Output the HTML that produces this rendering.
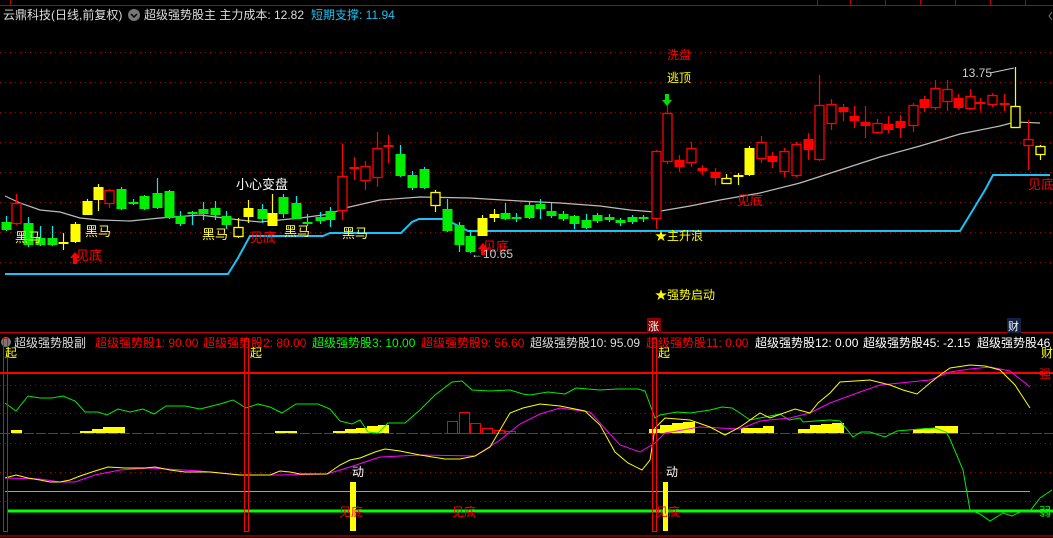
<!DOCTYPE html>
<html><head><meta charset="utf-8"><style>
html,body{margin:0;padding:0;background:#000;width:1053px;height:538px;overflow:hidden}
svg{display:block}
text{font-family:"Liberation Sans","Noto Sans CJK SC",sans-serif;font-size:12px}
</style></head><body>
<svg id="s" width="1053" height="538" xmlns="http://www.w3.org/2000/svg">
<rect width="1053" height="538" fill="#000"/>
<!-- top strip -->
<line x1="0" y1="5.5" x2="1053" y2="5.5" stroke="#b00" stroke-width="1"/>
<line x1="10.5" y1="0" x2="10.5" y2="5" stroke="#b00"/>
<g stroke="#b00"><line x1="817.5" y1="0" x2="817.5" y2="5"/><line x1="850.5" y1="0" x2="850.5" y2="5"/><line x1="885.5" y1="0" x2="885.5" y2="5"/><line x1="920.5" y1="0" x2="920.5" y2="5"/><line x1="955.5" y1="0" x2="955.5" y2="5"/><line x1="990.5" y1="0" x2="990.5" y2="5"/><line x1="1025.5" y1="0" x2="1025.5" y2="5"/></g>
<text x="3" y="19" fill="#ddd">云鼎科技(日线,前复权)</text>
<circle cx="134" cy="15" r="6" fill="#777"/><path d="M131 14l3 3 3-3" stroke="#000" stroke-width="1.5" fill="none"/>
<text x="144" y="19" fill="#ddd">超级强势股主  主力成本: 12.82</text>
<text x="311" y="19" fill="#19c3f5">短期支撑: 11.94</text>
<path d="M1052 12l-3 4 3 4" stroke="#777" fill="none"/>
<g id="grid" stroke="#a00" stroke-dasharray="1,4"></g>
<polyline fill="none" stroke="#bbb" stroke-width="1.2" points="5,196 20,203 40,210 60,212 80,218 100,220 130,221 160,218 200,215 240,220 260,222 300,218 330,214 345,208 380,200 420,197 470,198 520,201 560,203 600,206 630,210 655,212 690,206 720,200 760,193 800,183 840,170 880,157 920,146 960,134 1000,126 1015,122 1040,123"/>
<polyline fill="none" stroke="#19c3f5" stroke-width="2" points="5,274 228,274 238,258 250,236 323,236 330,233 401,233 412,222 419,219 445,219 468,231 960,231 968,218 985,190 993,175 1050,175"/>
<g id="cd"></g>
<!-- labels -->
<g fill="#ffff40" font-size="13">
<text x="15" y="242" style="font-size:13px">黑马</text><text x="85" y="236" style="font-size:13px">黑马</text><text x="202" y="239" style="font-size:13px">黑马</text><text x="284" y="236" style="font-size:13px">黑马</text><text x="342" y="238" style="font-size:13px">黑马</text>
</g>
<g fill="#f00"><text x="76" y="260" style="font-size:13px">见底</text><text x="250" y="242" style="font-size:13px">见底</text><text x="483" y="251" style="font-size:13px">见底</text><text x="737" y="205" style="font-size:13px">见底</text><text x="1028" y="189" style="font-size:13px">见底</text>
<path d="M70 258l5-6 5 6h-3v6h-4v-6z"/><path d="M478 249l5-6 5 6h-3v6h-4v-6z"/></g>
<text x="236" y="189" fill="#fff" style="font-size:13px">小心变盘</text>
<text x="471" y="258" fill="#ccc">←10.65</text>
<text x="667" y="59" fill="#f00">洗盘</text>
<text x="667" y="82" fill="#ff0">逃顶</text>
<path d="M665 94h4v6h3l-5 6-5-6h3z" fill="#0d0"/>
<text x="962" y="77" fill="#ccc">13.75</text><path d="M990 73l24-5" stroke="#ccc"/>
<text x="655" y="240" fill="#ff0">★主升浪</text>
<text x="655" y="299" fill="#ff0">★强势启动</text>
<!-- separator -->
<line x1="0" y1="332.5" x2="1053" y2="332.5" stroke="#c00"/>
<rect x="647" y="318" width="14" height="15" fill="#800"/><text x="648" y="330" fill="#fff" style="font-size:11px">涨</text>
<rect x="1007" y="318" width="14" height="15" fill="#124"/><text x="1008" y="330" fill="#fff" style="font-size:11px">财</text>
<circle cx="6" cy="342" r="5" fill="#777"/>
<text x="14" y="347" fill="#ddd">超级强势股副</text>
<text x="95" y="347" fill="#f00">超级强势股1: 90.00</text>
<text x="203" y="347" fill="#f00">超级强势股2: 80.00</text>
<text x="312" y="347" fill="#0f0">超级强势股3: 10.00</text>
<text x="421" y="347" fill="#f00">超级强势股9: 56.60</text>
<text x="530" y="347" fill="#ddd">超级强势股10: 95.09</text>
<text x="646" y="347" fill="#f00">超级强势股11: 0.00</text>
<text x="755" y="347" fill="#fff">超级强势股12: 0.00</text>
<text x="863" y="347" fill="#fff">超级强势股45: -2.15</text>
<text x="977" y="347" fill="#fff">超级强势股46</text>
<g id="grid2" stroke="#a00" stroke-dasharray="1,4"></g>
<line x1="0" y1="373" x2="1053" y2="373" stroke="#f00" stroke-width="2"/>
<line x1="0" y1="433.5" x2="1053" y2="433.5" stroke="#e00" stroke-dasharray="10,2"/>
<line x1="5" y1="491.5" x2="1030" y2="491.5" stroke="#3cc"/>
<line x1="8" y1="511" x2="1053" y2="511" stroke="#0f0" stroke-width="3"/>
<line x1="0" y1="536" x2="1053" y2="536" stroke="#d00"/>
<g id="bars"></g>
<polyline fill="none" stroke="#0e0" points="5,403 16,411 28,396 40,398 52,398 63,396 75,401 85,412 98,412 107,415 118,409 130,412 143,409 154,414 166,406 185,406 200,409 220,404 233,400 246,408 258,404 270,407 282,413 296,404 318,404 330,409 340,421 352,424 360,420 368,432 378,433 388,423 405,423 420,410 435,395 452,382 462,381 472,390 490,391 510,390 523,394 530,395 548,392 565,394 576,388 600,390 617,389 638,389 645,391 655,418 660,415 677,412 690,413 710,410 722,407 732,408 740,413 750,420 765,417 780,414 789,420 800,418 803,422 815,421 830,420 840,421 853,437 861,432 870,432 885,437 897,431 920,429 935,428 946,432 950,439 963,470 970,510 980,514 990,521 1003,513 1012,516 1020,512 1030,511 1040,498 1052,490"/>
<polyline fill="none" stroke="#f0f" points="5,478 40,479 60,482 75,482 95,475 120,470 150,468 200,471 240,475 280,475 327,474 350,467 380,457 420,455 475,456 500,440 520,424 540,414 560,408 590,412 620,445 640,452 655,443 665,433 700,427 740,429 760,421 790,418 810,413 830,403 860,392 880,385 900,383 930,380 950,372 970,369 990,367 1010,371 1030,387"/>
<polyline fill="none" stroke="#ff0" points="5,478 16,475 28,478 40,480 50,482 60,482 70,480 80,476 95,471 108,467 125,468 145,468 155,467 170,470 185,472 210,472 240,475 270,475 280,471 290,472 300,474 327,474 340,465 350,460 360,458 375,452 385,449 400,451 420,455 445,459 460,459 475,456 490,447 510,413 523,408 540,404 560,406 585,411 600,425 615,452 628,463 642,470 650,460 655,428 665,418 690,420 710,427 725,435 740,427 760,413 770,418 795,409 810,413 818,403 830,393 840,382 870,380 890,385 903,390 917,394 930,383 940,375 950,368 970,365 985,366 1000,370 1015,385 1030,408"/>
<g fill="none" stroke="#f00"><rect x="3.5" y="338.5" width="4" height="193"/><rect x="244.5" y="338.5" width="4" height="193"/><rect x="652.5" y="338.5" width="4" height="193"/></g>
<rect x="350" y="482" width="6" height="49" fill="#ff0"/><rect x="663" y="482" width="5" height="49" fill="#ff0"/>
<text x="352" y="476" fill="#fff">动</text><text x="666" y="476" fill="#fff">动</text>
<g fill="#f00"><text x="339" y="516">见底</text><text x="452" y="516">见底</text><text x="656" y="516">见底</text><text x="1039" y="378">强</text></g>
<text x="1039" y="516" fill="#0e0">弱</text>
<g fill="#ff0" style="font-size:10px"><text x="5" y="357">起</text><text x="250" y="357">起</text><text x="658" y="357">起</text><text x="1041" y="357">财</text></g>
</svg>
<script>
var NS="http://www.w3.org/2000/svg";
function el(p,t,a){var e=document.createElementNS(NS,t);for(var k in a)e.setAttribute(k,a[k]);p.appendChild(e);return e}
var g=document.getElementById('grid');
[52,82,112,142,172,202,232,262].forEach(function(y){el(g,'line',{x1:0,x2:1053,y1:y+.5,y2:y+.5})});
var g2=document.getElementById('grid2');
[385,413,443,472,501].forEach(function(y){el(g2,'line',{x1:0,x2:1053,y1:y+.5,y2:y+.5})});
var C={r:'#f00',g:'#00ee00',y:'#ff0',Y:'#ff0',R:'#f00'};
var d=[[6,222,230,216,231,'g'],[16,203,223,194,225,'R'],[28,223,245,217,247,'g'],[40,238,245,226,246,'g'],[52,238,245,226,246,'g'],[63,242,244,233,250,'y'],[75,224,242,222,243,'y'],[87,201,215,199,215,'y'],[98,187,200,184,211,'y'],[109,190,203,189,208,'R'],[121,189,209,187,210,'g'],[133,202,204,199,205,'g'],[144,196,209,195,210,'g'],[157,193,208,178,209,'g'],[169,191,218,190,219,'g'],[180,216,224,211,226,'g'],[192,212,214,211,225,'g'],[203,209,214,202,220,'g'],[215,208,215,201,220,'g'],[226,216,225,211,229,'g'],[238,227,236,218,238,'Y'],[248,208,217,200,223,'y'],[262,209,219,204,223,'g'],[272,213,226,194,226,'y'],[283,197,214,194,218,'g'],[296,203,219,196,219,'g'],[307,222,224,214,226,'g'],[320,217,221,212,224,'g'],[330,211,220,207,227,'g'],[342,176,210,144,220,'R'],[354,167,169,157,180,'r'],[365,166,180,161,190,'R'],[377,148,177,132,187,'R'],[388,145,147,135,163,'r'],[400,154,176,145,177,'g'],[412,175,188,171,190,'g'],[424,169,188,167,189,'g'],[435,192,205,190,212,'Y'],[447,209,231,199,232,'g'],[459,225,245,222,252,'g'],[470,236,252,230,253,'g'],[482,218,236,215,236,'y'],[494,214,218,209,222,'y'],[505,213,219,203,220,'g'],[516,217,219,213,222,'g'],[529,205,218,201,219,'g'],[540,204,209,199,219,'g'],[551,211,216,203,218,'g'],[563,214,219,211,221,'g'],[574,216,224,215,229,'g'],[586,220,228,214,229,'g'],[597,215,221,213,223,'g'],[609,217,220,214,222,'g'],[620,220,223,218,226,'g'],[632,217,222,215,224,'g'],[643,217,218,215,222,'g'],[656,151,218,150,229,'R'],[667,113,161,94,164,'R'],[679,160,167,155,172,'r'],[691,148,162,142,167,'R'],[702,168,171,165,175,'r'],[715,172,178,168,185,'r'],[726,178,183,174,184,'Y'],[738,175,177,173,185,'y'],[749,148,175,146,176,'y'],[761,142,158,136,163,'R'],[772,156,162,152,168,'r'],[784,151,171,148,177,'R'],[796,144,175,142,177,'R'],[808,139,150,133,160,'r'],[819,105,159,75,161,'R'],[831,104,123,99,130,'R'],[843,107,112,104,121,'r'],[854,116,121,106,128,'r'],[865,122,126,106,138,'r'],[877,123,132,119,134,'R'],[888,124,130,116,133,'r'],[900,121,128,115,138,'r'],[913,105,125,103,132,'R'],[924,99,108,96,112,'r'],[935,88,107,80,110,'R'],[947,89,101,80,111,'R'],[958,98,108,94,110,'r'],[970,96,108,89,110,'R'],[980,102,104,98,111,'r'],[992,95,104,93,107,'R'],[1004,103,104,94,111,'r'],[1015,106,127,67,128,'Y'],[1028,139,145,120,170,'R'],[1040,146,154,145,160,'Y']];
var cd=document.getElementById('cd');
d.forEach(function(c){var x=c[0],t=c[1],b=c[2],col=C[c[5]];var wc=col;if(c[5]=='g')wc='#0ee';
el(cd,'line',{x1:x+.5,x2:x+.5,y1:c[3],y2:c[4],stroke:wc,'stroke-width':1.2});
var h=Math.max(b-t,2);
if(c[5]=='R'||c[5]=='Y'){el(cd,'rect',{x:x-4,y:t+.5,width:9,height:h,fill:'#000',stroke:col,'stroke-width':1.3})}
else el(cd,'rect',{x:x-4.5,y:t,width:10,height:h,fill:col});});
var bars=document.getElementById('bars');
var yb=[[11,22,3],[80,92,2],[92,103,4],[103,114,6],[114,125,6],[275,297,2],[333,345,2],[345,356,4],[356,367,5],[367,378,7],[378,389,8],[649,660,4],[660,672,8],[672,683,10],[683,695,11],[741,763,5],[763,774,7],[798,810,4],[810,821,8],[821,832,9],[832,844,10],[913,924,4],[924,935,5],[935,946,7],[946,958,7]];
yb.forEach(function(b){el(bars,'rect',{x:b[0],y:433-b[2],width:b[1]-b[0],height:b[2],fill:'#ff0'})});
[[447,458,12],[459,470,21],[470,481,10],[482,493,5],[494,505,3],[505,516,2]].forEach(function(b){el(bars,'rect',{x:b[0]+.5,y:433.5-b[2],width:b[1]-b[0]-1,height:b[2],fill:'none',stroke:'#f00'})});
</script>
</body></html>
